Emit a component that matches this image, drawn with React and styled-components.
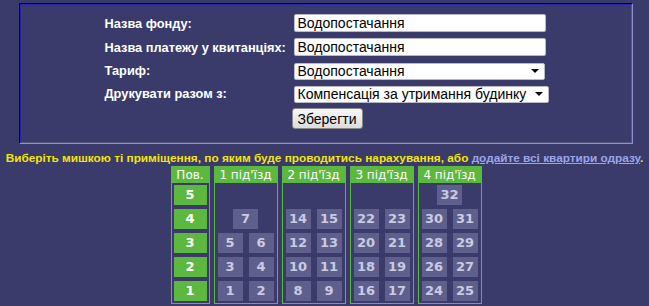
import styled, { createGlobalStyle } from "styled-components";

const GlobalStyle = createGlobalStyle`
    html, body {
        margin: 0;
        padding: 0;
        background: #3a3a6b;
    }
    body {
        font-family: "Liberation Sans", Arial, sans-serif;
    }
`;

const entrances = [
    { name: "1 під'їзд", floors: [[], [7], [5, 6], [3, 4], [1, 2]] },
    { name: "2 під'їзд", floors: [[], [14, 15], [12, 13], [10, 11], [8, 9]] },
    { name: "3 під'їзд", floors: [[], [22, 23], [20, 21], [18, 19], [16, 17]] },
    { name: "4 під'їзд", floors: [[32], [30, 31], [28, 29], [26, 27], [24, 25]] },
];

const floorNums = [5, 4, 3, 2, 1];

const App = () => {
    return (
        <>
            <GlobalStyle />
            <Page>
                <Panel>
                    <FormGrid>
                        <Label>Назва фонду:</Label>
                        <TextInput defaultValue="Водопостачання" />
                        <Label>Назва платежу у квитанціях:</Label>
                        <TextInput defaultValue="Водопостачання" />
                        <Label>Тариф:</Label>
                        <SelectWrap $width={251}>
                            <Select defaultValue="w">
                                <option value="w">Водопостачання</option>
                            </Select>
                        </SelectWrap>
                        <Label>Друкувати разом з:</Label>
                        <SelectWrap $width={255}>
                            <Select defaultValue="k">
                                <option value="k">Компенсація за утримання будинку</option>
                            </Select>
                        </SelectWrap>
                        <span />
                        <SaveButton>Зберегти</SaveButton>
                    </FormGrid>
                </Panel>
                <Hint>
                    Виберіть мишкою ті приміщення, по яким буде проводитись нарахування, або{" "}
                    <HintLink href="#">додайте всі квартири одразу</HintLink>.
                </Hint>
                <Building>
                    <Column>
                        <ColHead>Пов.</ColHead>
                        <FloorList>
                            {floorNums.map((n) => (
                                <FloorCell key={n}>{n}</FloorCell>
                            ))}
                        </FloorList>
                    </Column>
                    {entrances.map((e) => (
                        <Column key={e.name}>
                            <ColHead>{e.name}</ColHead>
                            <FloorList>
                                {e.floors.map((row, i) => (
                                    <AptRow key={i}>
                                        {row.map((a) => (
                                            <Apt key={a}>{a}</Apt>
                                        ))}
                                    </AptRow>
                                ))}
                            </FloorList>
                        </Column>
                    ))}
                </Building>
            </Page>
        </>
    );
};
export default App;

const Page = styled.div`
    width: 649px;
    height: 306px;
    padding-top: 3px;
    box-sizing: border-box;
    overflow: hidden;
`

const Panel = styled.div`
    width: 614px;
    height: 141px;
    margin-left: 19px;
    box-sizing: border-box;
    border: 2px groove #8e8ed4;
    border-top-color: #14145a;
    border-left-color: #14145a;
    display: flex;
    justify-content: center;
    align-items: flex-start;
    padding-top: 9px;
`

const FormGrid = styled.div`
    display: grid;
    grid-template-columns: 187px auto;
    align-content: start;
    column-gap: 2px;
    row-gap: 6px;
    align-items: center;
    margin-left: 1px;
`

const Label = styled.div`
    color: #fff;
    font-weight: bold;
    font-size: 12.8px;
    white-space: nowrap;
`

const TextInput = styled.input`
    width: 252px;
    height: 18px;
    box-sizing: border-box;
    border: 1px solid #b8b8c8;
    border-radius: 2px;
    padding: 0 3px;
    font-family: "Liberation Sans", Arial, sans-serif;
    font-size: 14px;
    color: #000;
    background: #fff;
    outline: none;
`

const SelectWrap = styled.div`
    position: relative;
    width: ${(p) => p.$width}px;
    height: 17px;

    &::after {
        content: "";
        position: absolute;
        right: 6px;
        top: 7px;
        border-left: 4px solid transparent;
        border-right: 4px solid transparent;
        border-top: 4px solid #000;
        pointer-events: none;
    }
`

const Select = styled.select`
    appearance: none;
    width: 100%;
    height: 17px;
    box-sizing: border-box;
    border: 1px solid #b8b8c8;
    border-radius: 2px;
    padding: 0 3px;
    font-family: "Liberation Sans", Arial, sans-serif;
    font-size: 14px;
    line-height: 15px;
    color: #000;
    background: #fff;
    outline: none;
`

const SaveButton = styled.button`
    justify-self: start;
    width: 71px;
    height: 21px;
    padding: 0;
    margin-left: -2px;
    border: 1px solid #8a8a8a;
    border-radius: 3px;
    background: linear-gradient(#f6f6f6, #dcdcdc);
    font-family: "Liberation Sans", Arial, sans-serif;
    font-size: 14px;
    color: #000;
`

const Hint = styled.div`
    margin-top: 7px;
    text-align: center;
    color: #f5e600;
    font-weight: bold;
    font-size: 11.8px;
    white-space: nowrap;
`

const HintLink = styled.a`
    color: #9aa6ea;
    text-decoration: underline;
`

const Building = styled.div`
    display: flex;
    justify-content: center;
    gap: 4px;
    margin-top: 1px;
    margin-left: 3px;
`

const Column = styled.div`
    border: 1px solid #5cb83e;
    display: flex;
    flex-direction: column;
    padding-bottom: 2px;
`

const ColHead = styled.div`
    height: 16px;
    line-height: 16px;
    background: #5cb83e;
    color: #fff;
    font-family: "DejaVu Sans", Verdana, sans-serif;
    font-size: 12px;
    text-align: center;
    margin-bottom: 2px;
    padding: 0 2px;
`

const FloorList = styled.div`
    display: flex;
    flex-direction: column;
    gap: 4px;
    padding: 0 3px;
`

const FloorCell = styled.div`
    width: 33px;
    height: 20px;
    margin: 0 -1px;
    background: #5cb83e;
    color: #fff;
    font-family: "DejaVu Sans", Verdana, sans-serif;
    font-weight: bold;
    font-size: 13px;
    line-height: 20px;
    text-align: center;
`

const AptRow = styled.div`
    height: 20px;
    display: flex;
    justify-content: center;
    gap: 6px;
    width: 56px;
`

const Apt = styled.div`
    width: 25px;
    height: 20px;
    background: #5f5f8e;
    color: #cacae2;
    font-family: "DejaVu Sans", Verdana, sans-serif;
    font-weight: bold;
    font-size: 13px;
    line-height: 20px;
    text-align: center;
`
